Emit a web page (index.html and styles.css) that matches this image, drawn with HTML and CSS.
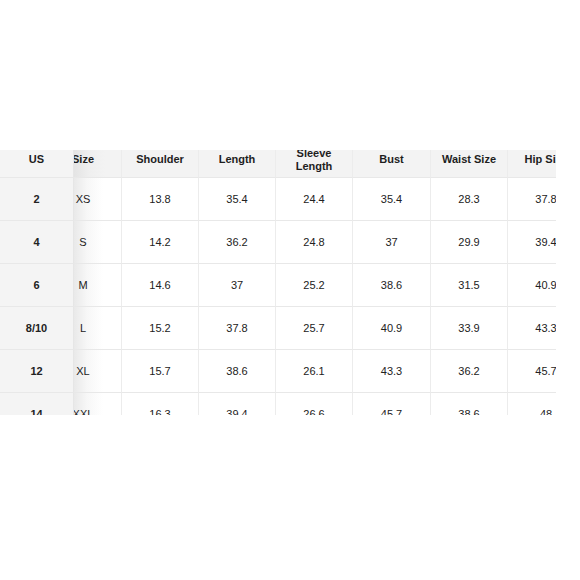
FILE: index.html
```html
<!DOCTYPE html>
<html>
<head>
<meta charset="utf-8">
<link rel="stylesheet" href="styles.css">
</head>
<body>
<div class="frame">
  <div class="chart">
    <div class="cell head us">US</div>
    <div class="cell head size">Size</div>
    <div class="cell head">Shoulder</div>
    <div class="cell head">Length</div>
    <div class="cell head">Sleeve<br>Length</div>
    <div class="cell head">Bust</div>
    <div class="cell head">Waist Size</div>
    <div class="cell head">Hip Size</div>

    <div class="cell us">2</div><div class="cell size">XS</div><div class="cell">13.8</div><div class="cell">35.4</div><div class="cell">24.4</div><div class="cell">35.4</div><div class="cell">28.3</div><div class="cell">37.8</div>
    <div class="cell us">4</div><div class="cell size">S</div><div class="cell">14.2</div><div class="cell">36.2</div><div class="cell">24.8</div><div class="cell">37</div><div class="cell">29.9</div><div class="cell">39.4</div>
    <div class="cell us">6</div><div class="cell size">M</div><div class="cell">14.6</div><div class="cell">37</div><div class="cell">25.2</div><div class="cell">38.6</div><div class="cell">31.5</div><div class="cell">40.9</div>
    <div class="cell us">8/10</div><div class="cell size">L</div><div class="cell">15.2</div><div class="cell">37.8</div><div class="cell">25.7</div><div class="cell">40.9</div><div class="cell">33.9</div><div class="cell">43.3</div>
    <div class="cell us">12</div><div class="cell size">XL</div><div class="cell">15.7</div><div class="cell">38.6</div><div class="cell">26.1</div><div class="cell">43.3</div><div class="cell">36.2</div><div class="cell">45.7</div>
    <div class="cell us">14</div><div class="cell size">XXL</div><div class="cell">16.3</div><div class="cell">39.4</div><div class="cell">26.6</div><div class="cell">45.7</div><div class="cell">38.6</div><div class="cell">48</div>
  </div>
</div>
</body>
</html>
```

FILE: styles.css
```css
html, body {
  margin: 0;
  padding: 0;
  background: #ffffff;
}

body {
  width: 580px;
  height: 580px;
  overflow: hidden;
  font-family: "Liberation Sans", Arial, sans-serif;
  font-size: 11px;
  color: #222222;
}

.frame {
  margin-top: 150px;
  width: 556px;
  height: 265px;
  overflow: hidden;
}

.chart {
  margin-top: -8px;
  display: grid;
  grid-template-columns: 74px 48px 77px 77px 77px 78px 77px 77px;
  grid-template-rows: 36px repeat(6, 43px);
  width: 585px;
}

.cell {
  box-sizing: border-box;
  display: flex;
  align-items: center;
  justify-content: center;
  text-align: center;
  border-bottom: 1px solid #e8e8e8;
  border-right: 1px solid #ececec;
  background: #ffffff;
  line-height: 13px;
}

.head {
  background: #f3f3f3;
  font-weight: bold;
  color: #1e1e1e;
}

.us {
  position: relative;
  z-index: 2;
  background: #f4f4f4;
  font-weight: bold;
  border-right: 1px solid #e6e6e6;
}

.size {
  width: 77px;
  margin-left: -29px;
  background: linear-gradient(90deg, #e9e9e9 29px, #f7f7f7 42px, #ffffff 58px);
}

.head.size {
  background: linear-gradient(90deg, #e4e4e4 29px, #efefef 44px, #f3f3f3 60px);
}
```
